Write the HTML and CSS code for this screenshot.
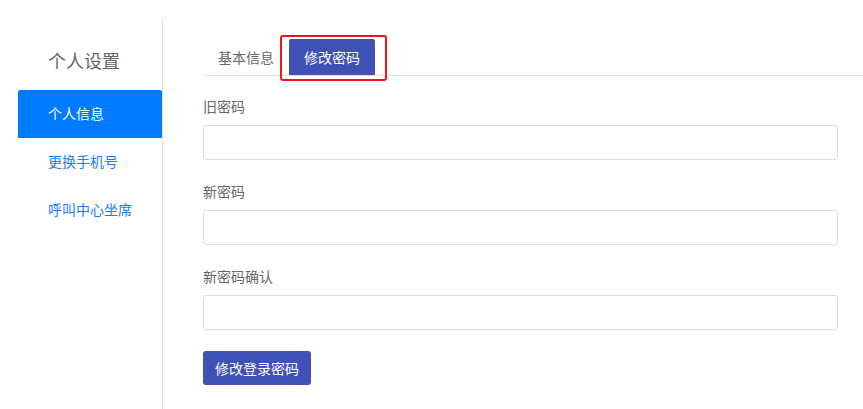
FILE: index.html
```html
<!DOCTYPE html>
<html lang="zh-CN">
<head>
  <meta charset="utf-8" />
  <meta name="viewport" content="width=device-width, initial-scale=1" />
  <title>个人设置</title>
  <link rel="stylesheet" href="styles.css">
</head>
<body>
  <div class="layout">
    <aside class="sidebar">
      <h2 class="sidebar-title">个人设置</h2>
      <nav class="side-nav">
        <a class="side-link active" href="#">个人信息</a>
        <a class="side-link" href="#">更换手机号</a>
        <a class="side-link" href="#">呼叫中心坐席</a>
      </nav>
    </aside>
    <main class="content">
      <div class="tabs">
        <a class="tab" href="#">基本信息</a>
        <a class="tab active" href="#">修改密码<span class="highlight"></span></a>
      </div>
      <form class="pwd-form">
        <div class="field">
          <label for="old">旧密码</label>
          <input id="old" type="password" />
        </div>
        <div class="field">
          <label for="new">新密码</label>
          <input id="new" type="password" />
        </div>
        <div class="field">
          <label for="confirm">新密码确认</label>
          <input id="confirm" type="password" />
        </div>
        <button type="button" class="btn">修改登录密码</button>
      </form>
    </main>
  </div>
</body>
</html>
```
FILE: styles.css
```css
* {
  box-sizing: border-box;
}

body {
  margin: 0;
  background: #fff;
  font-family: "Noto Sans CJK SC", "Noto Sans", sans-serif;
  font-size: 14px;
  color: #666;
}

a {
  text-decoration: none;
}

.layout {
  display: flex;
  margin-top: 18px;
  min-height: 391px;
}

.sidebar {
  width: 145px;
  margin-left: 18px;
  border-right: 1px solid #e2e2e2;
}

.sidebar-title {
  margin: 0;
  padding: 30px 0 18px 30px;
  font-size: 18px;
  font-weight: normal;
  line-height: 24px;
  color: #666;
}

.side-nav {
  display: flex;
  flex-direction: column;
}

.side-link {
  display: block;
  height: 48px;
  line-height: 47px;
  padding-left: 30px;
  color: #1e7cf2;
}

.side-link.active {
  background: #007bff;
  color: #fff;
  border-radius: 2px 2px 0 0;
}

.content {
  flex: 1;
  padding: 21px 0 0 40px;
}

.tabs {
  display: flex;
  border-bottom: 1px solid #e2e2e2;
}

.tab {
  position: relative;
  height: 36px;
  line-height: 36px;
  padding: 0 15px;
  color: #666;
}

.tab.active {
  background: #3f51b5;
  color: #fff;
  border-radius: 2px 2px 0 0;
}

.highlight {
  position: absolute;
  left: -9px;
  right: -12px;
  top: -4px;
  bottom: -6px;
  border: 2px solid #f3121a;
  border-radius: 3px;
}

.pwd-form {
  margin-right: 25px;
  padding-top: 20px;
}

.field {
  margin-bottom: 21px;
}

.field label {
  display: block;
  line-height: 20px;
  margin-bottom: 9px;
  color: #666;
}

.field input {
  display: block;
  width: 100%;
  height: 35px;
  border: 1px solid #dcdcdc;
  border-radius: 3px;
  padding: 0 10px;
  font: inherit;
}

.btn {
  height: 34px;
  padding: 0 12px;
  border: 0;
  border-radius: 3px;
  background: #3f51b5;
  color: #fff;
  font: inherit;
  cursor: pointer;
}
```
